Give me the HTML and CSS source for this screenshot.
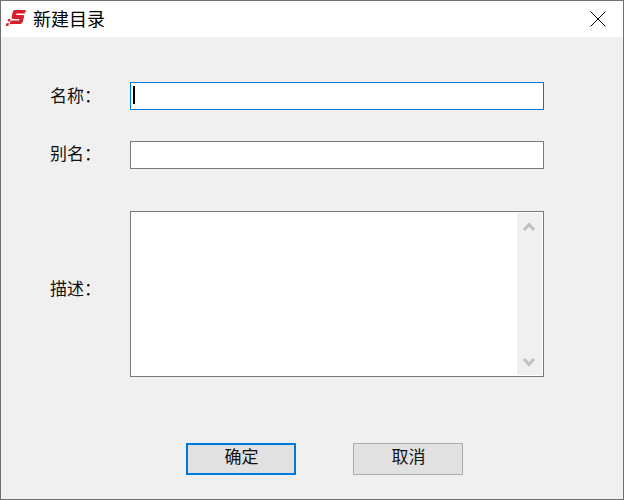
FILE: index.html
```html
<!DOCTYPE html>
<html lang="zh-CN">
<head>
<meta charset="utf-8">
<title>新建目录</title>
<link rel="stylesheet" href="styles.css">
</head>
<body>
<div class="window">
  <header class="titlebar">
    <svg class="logo" width="22" height="22" viewBox="0 0 22 22" aria-hidden="true">
      <path fill="#d5202e" d="M9.5 2 L21 2 L19.8 5.5 L11.6 5.5 L11.2 7 L18 7 Q19.6 7 19.2 8.6 L17.6 14 Q17 16 15 16 L5.2 16 L6.3 12.5 L14 12.5 L14.5 11 L8 11 Q6.2 11 6.6 9 L7.6 4.5 Q8 2 9.5 2 Z"/>
      <path fill="#d5202e" d="M3.2 11 H5.8 L5.1 13.6 H2.5 Z M1.4 15.2 H4 L3.3 18 H0.8 Z M5.2 13.6 H7.4 L6.8 16 H4.6 Z"/>
    </svg>
    <span class="title">新建目录</span>
    <svg class="close" width="16" height="16" viewBox="0 0 16 16" aria-hidden="true">
      <path d="M0.5 0.5 L15.5 15.5 M15.5 0.5 L0.5 15.5" stroke="#000" stroke-width="1" fill="none"/>
    </svg>
  </header>
  <main class="content">
    <div class="row row-name">
      <label class="label">名称：</label>
      <div class="field field-focus"><span class="caret"></span></div>
    </div>
    <div class="row row-alias">
      <label class="label label-alias">别名：</label>
      <div class="field"></div>
    </div>
    <div class="row row-desc">
      <label class="label label-desc">描述：</label>
      <div class="area">
        <div class="area-text"></div>
        <div class="scrollbar">
          <svg width="14" height="11" viewBox="0 0 14 11" aria-hidden="true"><path d="M2 9 L7 3.5 L12 9" stroke="#c0c0c0" stroke-width="3" fill="none"/></svg>
          <svg width="14" height="11" viewBox="0 0 14 11" aria-hidden="true"><path d="M2 2 L7 7.5 L12 2" stroke="#c0c0c0" stroke-width="3" fill="none"/></svg>
        </div>
      </div>
    </div>
    <div class="actions">
      <button class="btn btn-primary" type="button">确定</button>
      <button class="btn" type="button">取消</button>
    </div>
  </main>
</div>
</body>
</html>
```
FILE: styles.css
```css
* {
  box-sizing: border-box;
}

html,
body {
  margin: 0;
  padding: 0;
}

body {
  width: 624px;
  height: 500px;
  overflow: hidden;
  font-family: "Noto Sans CJK SC", "Liberation Sans", sans-serif;
  font-size: 17px;
  color: #111;
}

.window {
  width: 624px;
  height: 500px;
  border: 1px solid #707070;
  background: #f0f0f0;
  display: flex;
  flex-direction: column;
}

.titlebar {
  height: 36px;
  background: #fff;
  display: flex;
  align-items: center;
  padding-left: 4px;
  padding-right: 17px;
  flex: none;
}

.logo {
  flex: none;
}

.title {
  margin-left: 6px;
  padding-bottom: 2px;
  font-size: 18px;
  line-height: 24px;
  color: #000;
  flex: 1;
}

.close {
  flex: none;
}

.content {
  flex: 1;
  padding: 45px 79px 0 49px;
  display: flex;
  flex-direction: column;
}

.row {
  display: grid;
  grid-template-columns: 80px 414px;
  align-items: center;
}

.row-alias {
  margin-top: 31px;
}

.row-desc {
  margin-top: 42px;
}

.label {
  line-height: 24px;
  padding-bottom: 2px;
  color: #111;
}

.label-alias {
  padding-bottom: 4px;
}

.label-desc {
  padding-bottom: 12px;
}

.field {
  height: 28px;
  background: #fff;
  border: 1px solid #7a7a7a;
  display: flex;
  align-items: center;
  padding-left: 2px;
}

.field-focus {
  border-color: #0078d7;
}

.caret {
  width: 1.5px;
  height: 18px;
  margin-bottom: 2px;
  background: #000;
}

.area {
  height: 166px;
  background: #fff;
  border: 1px solid #7a7a7a;
  display: flex;
}

.area-text {
  flex: 1;
}

.scrollbar {
  width: 25px;
  margin: 1px 1px 1px 0;
  background: #f0f0f0;
  display: flex;
  flex-direction: column;
  justify-content: space-between;
  align-items: center;
  padding: 8px 1px 7px 0;
}

.actions {
  margin-top: 66px;
  display: flex;
  gap: 57px;
  padding-left: 136px;
}

.btn {
  width: 110px;
  height: 32px;
  padding: 0 0 6px 1px;
  background: #e1e1e1;
  border: 1px solid #adadad;
  border-radius: 0;
  font: inherit;
  line-height: 20px;
  color: #111;
}

.btn-primary {
  border: 2px solid #0078d7;
  padding-bottom: 6px;
}
```
